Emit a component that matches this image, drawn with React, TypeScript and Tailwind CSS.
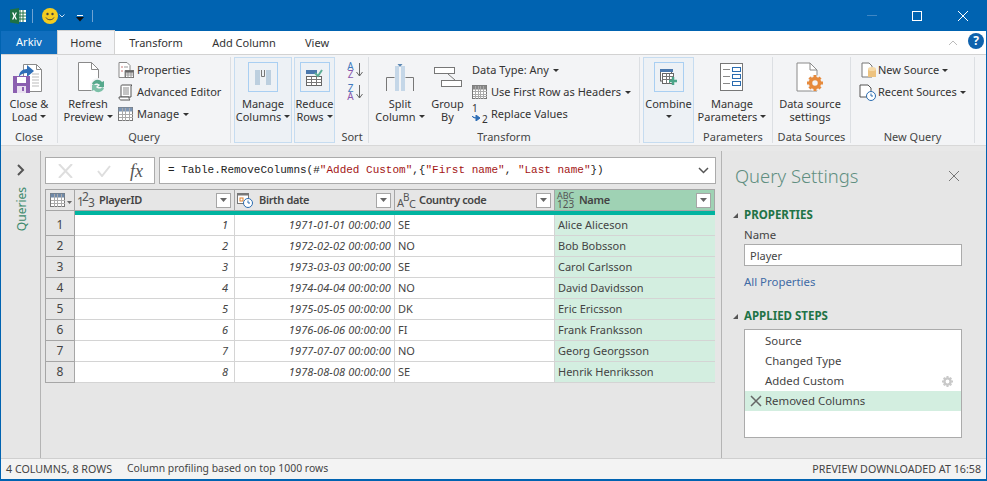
import React from "react";

const Caret = ({ className = "" }: { className?: string }) => (
  <svg width="6" height="3" viewBox="0 0 6 3" className={`inline-block shrink-0 ${className}`}><path d="M0 0h6L3 3z" fill="#333" /></svg>
);

const Group = ({ w, label, sep = true, children }: { w: string; label?: string; sep?: boolean; children: React.ReactNode }) => (
  <div className={`${w} flex flex-col h-full shrink-0 ${sep ? "border-r border-[#dcdfe3]" : ""}`}>
    <div className="flex-1 flex min-h-0">{children}</div>
    {label && <div className="h-[13px] shrink-0 text-center leading-[13px] text-[#444] whitespace-nowrap">{label}</div>}
  </div>
);

const Big = ({ icon, l1, l2, caret, className = "" }: { icon: React.ReactNode; l1: string; l2?: string; caret?: boolean; className?: string }) => (
  <div className={`flex flex-col items-center ${className}`}>
    <div className="h-[40px] shrink-0 flex items-center justify-center">{icon}</div>
    <div className="leading-[13px] h-[13px] shrink-0 whitespace-nowrap text-[#333]">{l1}</div>
    <div className="leading-[13px] shrink-0 whitespace-nowrap text-[#333] flex items-center gap-[3px] h-[13px]">{l2}{caret && <Caret />}</div>
  </div>
);

const Small = ({ icon, label, caret, gap = "gap-[3px]" }: { icon?: React.ReactNode; label: string; caret?: boolean; gap?: string }) => (
  <div className={`flex items-center h-[22px] shrink-0 whitespace-nowrap text-[#333] ${gap}`}>
    {icon}{label}{caret && <Caret className="ml-px" />}
  </div>
);

const Boxed = ({ children }: { children: React.ReactNode }) => (
  <div className="w-[30px] h-[30px] border border-[#a9cff2] flex items-center justify-center">{children}</div>
);

const CloseLoad = () => (
  <svg width="32" height="32" viewBox="0 0 32 32">
    <path d="M10.500 3.500h13l5 5v22h-18z" fill="#fff" stroke="#8a8a8a" />
    <path d="M23.500 3.500v5h5" fill="none" stroke="#8a8a8a" />
    <path d="M19 13h7M19 16h7M19 19h7M19 22h7M19 25h7" stroke="#bbb" />
    <path d="M6 16c0-5 3-8 8-8V4l7 6-7 6v-4c-4 0-6 1-8 4z" fill="#2f6fb8" />
    <rect x="0" y="15" width="17" height="17" fill="#8b5fb0" />
    <rect x="4" y="16" width="9" height="6" fill="#fff" />
    <rect x="4" y="25" width="9" height="7" fill="#e9dff1" />
    <rect x="9" y="26" width="2" height="4" fill="#8b5fb0" />
  </svg>
);
const Refresh = () => (
  <svg width="34" height="34" viewBox="0 0 34 34">
    <path d="M7.500 2.500h13l7 7v21h-20z" fill="#fff" stroke="#8a8a8a" />
    <path d="M20.500 2.500v7h7" fill="none" stroke="#8a8a8a" />
    <circle cx="27" cy="26" r="8" fill="#f3f4f6" />
    <path d="M21 24c1-4 7-6 10-2l2-1v6h-6l2-2c-2-2-5-2-6 0z" fill="#56a88c" />
    <path d="M33 28c-1 4-7 6-10 2l-2 1v-6h6l-2 2c2 2 5 2 6 0z" fill="#7cc0a8" />
  </svg>
);
const PropsIcon = () => (
  <svg width="16" height="16" viewBox="0 0 16 16">
    <path d="M1 0.500h8l3 3v5H7v7H1z" fill="#fff" stroke="#888" />
    <path d="M3 5h2M3 9h2" stroke="#c77" /><path d="M6 5h4" stroke="#999" />
    <rect x="7.500" y="8.500" width="8" height="7" fill="#fff" stroke="#777" />
    <path d="M7.500 11h8M7.500 13h8M10 8.500v7M13 8.500v7" stroke="#999" />
    <rect x="7.500" y="8.500" width="8" height="2" fill="#666" />
  </svg>
);
const Scroll = () => (
  <svg width="16" height="17" viewBox="0 0 16 17">
    <path d="M4 1h10l-1 1v11H3V3c0-1 0-2 1-2z" fill="#fff" stroke="#555" />
    <path d="M1 13h10v1c0 1 1 2 1 2H3c-1 0-2-1-2-3z" fill="#fff" stroke="#555" />
    <path d="M5 4h6M5 6h6M5 8h6M5 10h6" stroke="#888" />
  </svg>
);
const Grid = ({ color = "#6f89a8", cols = 3, rows = 3 }: { color?: string; cols?: number; rows?: number }) => {
  const v = [], h = [];
  for (let i = 1; i < cols; i++) v.push(<path key={i} d={`M${Math.round((i * 14) / cols) + 0.5} 1v13`} stroke="#aaa" />);
  for (let i = 1; i < rows; i++) h.push(<path key={i} d={`M1 ${Math.round((i * 9) / rows) + 4.5}h14`} stroke="#aaa" />);
  return (
    <svg width="16" height="15" viewBox="0 0 16 15">
      <rect x="0.500" y="0.500" width="14" height="13" fill="#fff" stroke="#777" />
      <rect x="0.500" y="0.500" width="14" height="4" fill={color} />
      {v}{h}
    </svg>
  );
};
const ManageCols = () => (
  <svg width="16" height="15" viewBox="0 0 16 15">
    <rect x="0" y="0" width="5" height="15" fill="#bccfdf" /><rect x="11" y="0" width="5" height="15" fill="#bccfdf" />
    <path d="M6.500 0v6.500h3V0" fill="none" stroke="#777" />
  </svg>
);
const ReduceRows = () => (
  <svg width="17" height="17" viewBox="0 0 17 17">
    <rect x="0.500" y="7.500" width="15" height="9" fill="#fff" stroke="#666" />
    <path d="M0.500 10.500h15M0.500 13.500h15M5.500 7.500v9M10.500 7.500v9" stroke="#777" />
    <rect x="0" y="1" width="11" height="4" fill="#4a78ad" />
    <path d="M9 4l3 3 4-6" fill="none" stroke="#5cad94" strokeWidth="2" />
  </svg>
);
const SortIcon = ({ a, b }: { a: string; b: string }) => (
  <div className="flex items-start h-[16px] w-[18px] shrink-0">
    <div className="text-[10px] leading-[8px] text-center w-[9px]">
      <div className="text-[#3f79bd]">{a}</div>
      <div className="text-[#8a57ad]">{b}</div>
    </div>
    <svg width="7" height="16" viewBox="0 0 7 16" className="ml-[1px]"><path d="M3.500 1v13M.5 10l3 4 3-4" fill="none" stroke="#666" /></svg>
  </div>
);
const Split = () => (
  <svg width="28" height="28" viewBox="0 0 28 28">
    <path d="M.5 28V14.500h8M27.500 28V14.500h-8" fill="none" stroke="#777" />
    <rect x="9" y="3" width="4" height="25" fill="#c5d7e8" /><rect x="15" y="3" width="4" height="25" fill="#c5d7e8" />
    <path d="M11.500 1h5L14 4z" fill="#5b87b2" />
  </svg>
);
const GroupBy = () => (
  <svg width="28" height="20" viewBox="0 0 28 20">
    <rect x="0.500" y="0.500" width="20" height="6" fill="#fff" stroke="#777" />
    <rect x="7.500" y="13.500" width="20" height="6" fill="#fff" stroke="#777" />
    <path d="M14 7l7 6" stroke="#777" />
  </svg>
);
const Replace = () => (
  <div className="relative w-[16px] h-[18px] text-[10px] leading-none text-[#333]">
    <span className="absolute left-0 -top-[2px]">1</span>
    <span className="absolute left-[10px] top-[9px]">2</span>
    <svg width="9" height="6" viewBox="0 0 9 6" className="absolute left-0 top-[10px]"><path d="M0 1c1 2 3 2 5 2M4 0l4 3-4 3z" fill="#2d6db5" stroke="#2d6db5" /></svg>
  </div>
);
const Combine = () => (
  <svg width="17" height="16" viewBox="0 0 17 16">
    <rect x="0.500" y="2" width="11" height="10" fill="#fff" stroke="#666" />
    <rect x="0" y="0" width="13" height="3" fill="#4a78ad" />
    <rect x="2.500" y="4.500" width="11" height="10" fill="#fff" stroke="#666" />
    <path d="M2.500 7.500h11M2.500 10.500h11M6.500 4.500v10M9.500 4.500v10" stroke="#777" />
    <path d="M13 8v8M9 12h8" stroke="#4ca589" strokeWidth="2.500" />
  </svg>
);
const Params = () => (
  <svg width="24" height="28" viewBox="0 0 24 28">
    <rect x="0.500" y="0.500" width="22" height="27" fill="#fff" stroke="#777" />
    <rect x="12.500" y="4.500" width="8" height="4" fill="#fff" stroke="#2a6cb0" />
    <rect x="12.500" y="11.500" width="8" height="4" fill="#fff" stroke="#2a6cb0" />
    <rect x="12.500" y="18.500" width="8" height="4" fill="#fff" stroke="#2a6cb0" />
    <path d="M3 6.500h7M3 13.500h7M3 20.500h7" stroke="#888" />
  </svg>
);
const DataSource = () => (
  <svg width="28" height="30" viewBox="0 0 28 30">
    <path d="M1 1h13l7 7v21H1z" fill="#fff" stroke="#8a8a8a" />
    <path d="M14 1v7h7" fill="none" stroke="#8a8a8a" />
    <g transform="translate(10 13)">
      <circle cx="9" cy="8" r="8" fill="#f3f4f6" />
      <circle cx="9" cy="8" r="4.500" fill="none" stroke="#e68a3c" strokeWidth="3.500" />
      <path d="M9 0v16M1 8h16M3.500 2.500l11 11M14.500 2.500l-11 11" stroke="#e68a3c" strokeWidth="3" strokeDasharray="2.500 11" />
    </g>
  </svg>
);
const NewSrc = () => (
  <svg width="15" height="16" viewBox="0 0 15 16" className="ml-[2px]">
    <path d="M1 1h7l3 3v11H1z" fill="#fff" stroke="#777" />
    <path d="M7 7h8v8H7z" fill="#edc27f" /><ellipse cx="11" cy="7" rx="4" ry="2" fill="#f5d9a8" />
  </svg>
);
const RecentSrc = () => (
  <svg width="17" height="17" viewBox="0 0 17 17">
    <path d="M1 1h8l3 3v9H1z" fill="#fff" stroke="#555" />
    <circle cx="12" cy="12" r="4.500" fill="#fff" stroke="#2a6cb0" />
    <path d="M12 9.500V12h2" fill="none" stroke="#2a6cb0" />
  </svg>
);
const TypeNum = () => (
  <span className="flex items-center w-[16px] text-[12px] leading-none text-[#555]">
    <span className="relative top-[2px] w-[5px]">1</span>
    <span className="relative -top-[3px] w-[6px]">2</span>
    <span className="relative top-[3px] w-[5px]">3</span>
  </span>
);
const TypeDate = () => (
  <svg width="16" height="16" viewBox="0 0 16 16">
    <rect x="0.500" y="1.500" width="11" height="10" fill="#fff" stroke="#777" />
    <rect x="0.500" y="1.500" width="11" height="2" fill="#777" />
    <rect x="3" y="6" width="3" height="3" fill="#fff" stroke="#e0812d" />
    <circle cx="11" cy="11" r="4.500" fill="#fff" stroke="#2a6cb0" />
    <path d="M11 8.500V11h2" fill="none" stroke="#2a6cb0" />
  </svg>
);
const TypeText = () => (
  <span className="flex items-center w-[17px] text-[11px] leading-none text-[#555]">
    <span className="relative top-[2px] w-[6px]">A</span>
    <span className="relative -top-[3px] w-[6px] text-[10px]">B</span>
    <span className="relative top-[3px] w-[5px]">C</span>
  </span>
);
const TypeAny = () => <span className="text-[9px] leading-[8px] text-[#555] w-[19px] flex flex-col"><span>ABC</span><span className="text-[10px]">123</span></span>;

const Filter = () => (
  <div className="w-[15px] h-[15px] shrink-0 bg-white border border-[#a6a6a6] flex items-center justify-center"><svg width="7" height="4" viewBox="0 0 7 4"><path d="M0 0h7L3.500 4z" fill="#666" /></svg></div>
);

const Head = ({ icon, label, active }: { icon: React.ReactNode; label: string; active?: boolean }) => (
  <div className={`w-[160px] shrink-0 h-full flex items-center pl-[2px] pr-[3px] border-r border-[#a6a6a6] ${active ? "bg-[#9fd2b4]" : ""}`}>
    <div className="w-[22px] shrink-0 flex items-center">{icon}</div>
    <div className="flex-1 font-semibold text-[#444] tracking-[-0.35px] whitespace-nowrap">{label}</div>
    <Filter />
  </div>
);

const rows = [
  ["1", "1971-01-01 00:00:00", "SE", "Alice Aliceson"],
  ["2", "1972-02-02 00:00:00", "NO", "Bob Bobsson"],
  ["3", "1973-03-03 00:00:00", "SE", "Carol Carlsson"],
  ["4", "1974-04-04 00:00:00", "NO", "David Davidsson"],
  ["5", "1975-05-05 00:00:00", "DK", "Eric Ericsson"],
  ["6", "1976-06-06 00:00:00", "FI", "Frank Franksson"],
  ["7", "1977-07-07 00:00:00", "NO", "Georg Georgsson"],
  ["8", "1978-08-08 00:00:00", "SE", "Henrik Henriksson"],
];

const Tab = ({ label, w }: { label: string; w: string }) => <div className={`${w} text-center text-[#333] leading-[24px]`}>{label}</div>;

const SectionHead = ({ label }: { label: string }) => (
  <div className="flex items-center font-bold text-[#217346] h-[16px] text-[11.5px]">
    <svg width="7" height="7" viewBox="0 0 7 7" className="ml-[10px] mr-[5px]"><path d="M6 1v5H1z" fill="#555" /></svg>
    {label}
  </div>
);

export default function App() {
  return (
    <div className="w-[987px] h-[481px] bg-[#0063b1] flex flex-col overflow-hidden font-['Noto_Sans',sans-serif] text-[11px] border-b-[2px] border-[#0063b1]">
      {/* title bar */}
      <div className="h-[31px] shrink-0 flex items-center pl-[10px] pr-[19px]">
        <svg width="16" height="16" viewBox="0 0 16 16">
          <rect x="7" y="2" width="9" height="12" fill="#fff" />
          <path d="M10 2v12M13 2v12M7 5h9M7 8h9M7 11h9" stroke="#217346" />
          <path d="M0 1.500L9 0v16L0 14.500z" fill="#1e7145" />
          <path d="M2 4.500l1.500 3.500L2 11.500h1.500L4.500 9l1 2.500H7L5.300 8 7 4.500H5.600L4.500 7 3.500 4.500z" fill="#fff" />
        </svg>
        <div className="w-px h-[14px] bg-[#6fa3d3] ml-[6px] mr-[9px]" />
        <svg width="16" height="16" viewBox="0 0 16 16">
          <circle cx="8" cy="8" r="8" fill="#f4cc1f" />
          <circle cx="5.500" cy="6" r="1.200" fill="#444" /><circle cx="10.500" cy="6" r="1.200" fill="#444" />
          <path d="M4 9.500c1.500 3 6.500 3 8 0" fill="none" stroke="#444" />
        </svg>
        <svg width="6" height="4" viewBox="0 0 6 4" className="ml-[1px]"><path d="M.5.500l2.500 2.500L5.500.500" fill="none" stroke="#cfe2f3" /></svg>
        <svg width="8" height="7" viewBox="0 0 8 7" className="ml-[11px] mt-[5px]"><path d="M1 .500h6" stroke="#fff" /><path d="M0 2h8L4 6.500z" fill="#111" /></svg>
        <div className="w-px h-[12px] bg-[#6fa3d3] ml-[8px]" />
        <div className="flex-1" />
        <div className="w-[10px] h-px bg-[#3f87c4] mr-[35px]" />
        <div className="w-[10px] h-[10px] border border-white mr-[36px]" />
        <svg width="10" height="10" viewBox="0 0 10 10"><path d="M0 0l10 10M10 0L0 10" stroke="#fff" /></svg>
      </div>

      {/* body */}
      <div className="flex-1 min-h-0 flex flex-col ml-[1px] mr-[1px] bg-[#e6e6e6]">
        {/* tabs */}
        <div className="h-[24px] shrink-0 bg-white border-b border-[#d2d2d2] flex">
          <div className="w-[56px] bg-[#106ebe] text-white text-center leading-[22px] h-[23px]">Arkiv</div>
          <div className="w-[58px] h-[24px] bg-[#f3f4f6] border-x border-t border-[#d2d2d2] text-center text-[#333] leading-[22px] -mt-[1px] pt-[1px]">Home</div>
          <Tab label="Transform" w="w-[82px]" />
          <Tab label="Add Column" w="w-[94px]" />
          <Tab label="View" w="w-[52px]" />
          <div className="flex-1" />
          <svg width="10" height="6" viewBox="0 0 10 6" className="mt-[9px] mr-[10px]"><path d="M1 5l4-4 4 4" fill="none" stroke="#bbb" /></svg>
          <div className="w-[16px] h-[16px] rounded-full bg-[#0f62ad] text-white text-center font-bold text-[12px] leading-[16px] mt-[2px] mr-[2px]">?</div>
        </div>

        {/* ribbon */}
        <div className="h-[91px] shrink-0 bg-[#f3f4f6] border-b border-[#d8d8d8] flex pt-[2px] pb-[2px]">
          <Group w="w-[57px]" label="Close">
            <Big icon={<CloseLoad />} l1="Close &" l2="Load" caret className="w-full" />
          </Group>
          <Group w="w-[173px]" label="Query">
            <Big icon={<Refresh />} l1="Refresh" l2="Preview" caret className="w-[60px]" />
            <div className="flex flex-col pt-[2px]">
              <Small icon={<PropsIcon />} label="Properties" />
              <Small icon={<Scroll />} label="Advanced Editor" />
              <Small icon={<Grid color="#7d95b3" cols={4} rows={3} />} label="Manage" caret gap="gap-[3px]" />
            </div>
          </Group>
          <div className="w-[58px] h-full ml-[3px] bg-[#edf1f5] border border-[#c6dcf0] flex justify-center shrink-0">
            <Big icon={<Boxed><ManageCols /></Boxed>} l1="Manage" l2="Columns" caret className="-mt-px" />
          </div>
          <div className="w-[41px] h-full ml-[2px] bg-[#edf1f5] border border-[#c6dcf0] flex justify-center shrink-0">
            <Big icon={<Boxed><ReduceRows /></Boxed>} l1="Reduce" l2="Rows" caret className="-mt-px" />
          </div>
          <Group w="w-[33px] ml-[1px]" label="Sort">
            <div className="flex flex-col pl-[10px] pt-[5px] gap-[6px] h-full">
              <SortIcon a="A" b="Z" />
              <SortIcon a="Z" b="A" />
            </div>
          </Group>
          <Group w="w-[271px]" label="Transform">
            <Big icon={<Split />} l1="Split" l2="Column" caret className="w-[62px]" />
            <Big icon={<GroupBy />} l1="Group" l2="By" className="w-[33px]" />
            <div className="flex flex-col pl-[8px] pt-[2px]">
              <Small label="Data Type: Any" caret />
              <Small icon={<Grid color="#888" cols={5} rows={4} />} label="Use First Row as Headers" caret />
              <Small icon={<Replace />} label="Replace Values" />
            </div>
          </Group>
          <div className="w-[51px] h-full ml-[3px] bg-[#edf1f5] border border-[#c6dcf0] flex justify-center shrink-0">
            <Big icon={<Boxed><Combine /></Boxed>} l1="Combine" l2="" caret className="-mt-px" />
          </div>
          <Group w="w-[79px]" label="Parameters">
            <Big icon={<Params />} l1="Manage" l2="Parameters" caret className="w-full pr-[2px]" />
          </Group>
          <Group w="w-[78px]" label="Data Sources">
            <Big icon={<DataSource />} l1="Data source" l2="settings" className="w-full pr-[3px]" />
          </Group>
          <Group w="w-[124px]" label="New Query">
            <div className="flex flex-col pl-[8px] pt-[2px]">
              <Small icon={<NewSrc />} label="New Source" caret gap="gap-[2px]" />
              <Small icon={<RecentSrc />} label="Recent Sources" caret gap="gap-[2px]" />
            </div>
          </Group>
          <div className="flex-1" />
        </div>

        <div className="h-[5px] shrink-0 bg-[#e8e8e8]" />

        {/* main */}
        <div className="flex-1 min-h-0 flex">
          {/* left rail */}
          <div className="w-[40px] shrink-0 border-r border-[#b4b4b4] flex flex-col items-center pt-[13px]">
            <svg width="8" height="12" viewBox="0 0 8 12"><path d="M1 1l5 5-5 5" fill="none" stroke="#555" strokeWidth="2" /></svg>
            <div className="mt-[11px] text-[#3d8a6d] text-[12px] [writing-mode:vertical-rl] rotate-180 ml-[2px]">Queries</div>
          </div>

          {/* center */}
          <div className="w-[680px] shrink-0 pl-[4px] pr-[5px] pt-[6px]">
            {/* formula */}
            <div className="flex h-[27px] gap-[4px]">
              <div className="w-[110px] bg-white border border-[#ababab] flex items-center pl-[12px]">
                <svg width="15" height="14" viewBox="0 0 15 14"><path d="M1 0l13 14M14 0L1 14" stroke="#dedede" strokeWidth="2" /></svg>
                <svg width="14" height="12" viewBox="0 0 14 12" className="ml-[24px]"><path d="M1 6l4 5 8-10" fill="none" stroke="#dedede" strokeWidth="2" /></svg>
                <span className="ml-[19px] font-['Liberation_Serif',serif] italic text-[18px] leading-none text-[#555]">fx</span>
              </div>
              <div className="flex-1 bg-white border border-[#ababab] flex items-center pl-[8px] pr-[6px] font-['Liberation_Mono',monospace] text-[11px] whitespace-pre">
                <span className="text-[#222]">= Table.RemoveColumns(#</span>
                <span className="text-[#a31515]">"Added Custom"</span>
                <span className="text-[#222]">,{"{"}</span>
                <span className="text-[#a31515]">"First name"</span>
                <span className="text-[#222]">, </span>
                <span className="text-[#a31515]">"Last name"</span>
                <span className="text-[#222]">{"})"}</span>
                <div className="flex-1" />
                <svg width="11" height="7" viewBox="0 0 11 7"><path d="M1 1l4.500 4.500L10 1" fill="none" stroke="#555" strokeWidth="1.500" /></svg>
              </div>
            </div>
            {/* table */}
            <div className="mt-[5px] w-[670px] border-l border-t border-[#a6a6a6]">
              <div className="flex h-[21px] bg-[#e6e6e6] border-b border-[#a6a6a6]">
                <div className="w-[29px] shrink-0 flex items-center pl-[4px] border-r border-[#a6a6a6] gap-[1px]">
                  <Grid color="#6f89a8" cols={4} rows={3} />
                  <svg width="5" height="3" viewBox="0 0 5 3" className="shrink-0 mt-[5px]"><path d="M0 0h5L2.500 3z" fill="#666" /></svg>
                </div>
                <Head icon={<TypeNum />} label="PlayerID" />
                <Head icon={<TypeDate />} label="Birth date" />
                <Head icon={<TypeText />} label="Country code" />
                <Head icon={<TypeAny />} label="Name" active />
              </div>
              <div className="flex h-[4px]">
                <div className="w-[29px] bg-[#e6e6e6] border-r border-[#a6a6a6]" />
                <div className="flex-1 bg-[#00b4a0]" />
              </div>
              {rows.map((r) => (
                <div key={r[0]} className="flex h-[21px] leading-[20px]">
                  <div className="w-[29px] shrink-0 bg-[#e6e6e6] border-r border-b border-[#a6a6a6] text-center text-[12px] text-[#444]">{r[0]}</div>
                  <div className="w-[160px] shrink-0 bg-white border-r border-b border-[#d4d4d4] text-right italic pr-[6px] text-[#444]">{r[0]}</div>
                  <div className="w-[160px] shrink-0 bg-white border-r border-b border-[#d4d4d4] text-right italic pr-[3px] text-[#444] tracking-[0.1px]">{r[1]}</div>
                  <div className="w-[160px] shrink-0 bg-white border-r border-b border-[#d4d4d4] pl-[3px] text-[#444]">{r[2]}</div>
                  <div className="w-[160px] shrink-0 bg-[#d3eee0] border-b border-[#d4d4d4] pl-[3px] text-[#444]">{r[3]}</div>
                </div>
              ))}
            </div>
          </div>

          {/* query settings */}
          <div className="flex-1 border-l border-[#b4b4b4] pt-[12px] pr-[24px] text-[11.4px]">
            <div className="flex items-center justify-between pl-[13px] pr-[2px]">
              <span className="text-[18.400px] leading-[26px] text-[#5f8e80] font-light">Query Settings</span>
              <svg width="12" height="12" viewBox="0 0 12 12"><path d="M1 1l10 10M11 1L1 11" stroke="#777" /></svg>
            </div>
            <div className="mt-[18px]"><SectionHead label="PROPERTIES" /></div>
            <div className="pl-[22px]">
              <div className="mt-[4px] leading-[16px] text-[#444]">Name</div>
              <div className="mt-[1px] h-[22px] bg-white border border-[#ababab] pl-[5px] leading-[21px] text-[#444] text-[11px]">Player</div>
              <div className="mt-[8px] leading-[16px] text-[#3f6ba5]">All Properties</div>
            </div>
            <div className="mt-[18px]"><SectionHead label="APPLIED STEPS" /></div>
            <div className="ml-[22px] mt-[5px] h-[109px] bg-white border border-[#ababab] pt-[1px] text-[#444]">
              <div className="h-[20px] leading-[20px] pl-[20px]">Source</div>
              <div className="h-[20px] leading-[20px] pl-[20px]">Changed Type</div>
              <div className="h-[20px] leading-[20px] pl-[20px] flex items-center justify-between pr-[8px]">
                Added Custom
                <svg width="11" height="11" viewBox="0 0 16 16"><circle cx="8" cy="8" r="4.500" fill="none" stroke="#c8c8c8" strokeWidth="3.500" /><path d="M8 0v16M0 8h16M2.500 2.500l11 11M13.500 2.500l-11 11" stroke="#c8c8c8" strokeWidth="3" strokeDasharray="2.500 11" /></svg>
              </div>
              <div className="h-[20px] leading-[20px] pl-[5px] bg-[#d3eee0] flex items-center gap-[3px]">
                <svg width="12" height="12" viewBox="0 0 12 12"><path d="M1 1l10 10M11 1L1 11" stroke="#666" strokeWidth="1.500" /></svg>
                Removed Columns
              </div>
            </div>
          </div>
        </div>

        {/* status */}
        <div className="h-[21px] shrink-0 bg-[#f3f3f3] border-t border-[#cfcfcf] flex items-center pl-[5px] pr-[5px] text-[#444] text-[10.700px]">
          <span>4 COLUMNS, 8 ROWS</span>
          <span className="ml-[15px] text-[10.400px]">Column profiling based on top 1000 rows</span>
          <div className="flex-1" />
          <span>PREVIEW DOWNLOADED AT 16:58</span>
        </div>
      </div>
    </div>
  );
}
